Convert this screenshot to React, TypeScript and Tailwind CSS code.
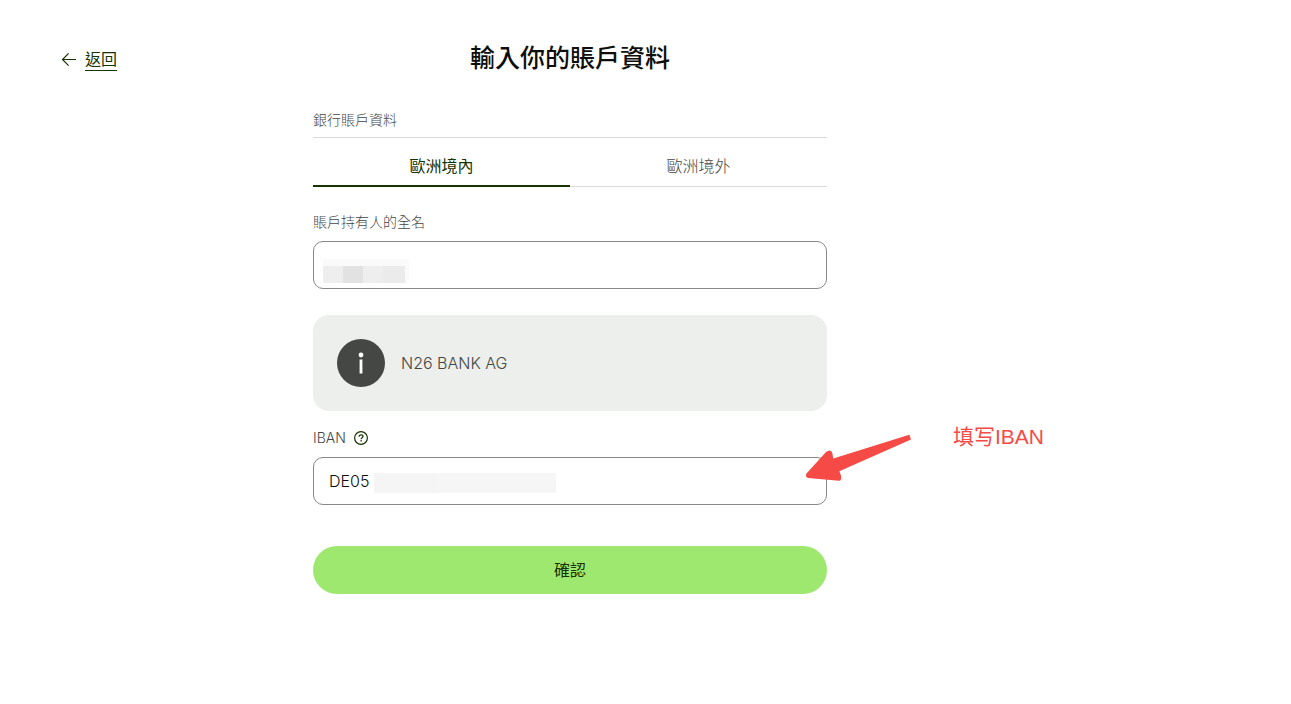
import { useState } from "react";

const tabs = ["歐洲境內", "歐洲境外"];

function BackArrow() {
  return (
    <svg className="h-4 w-4 shrink-0" viewBox="0 0 16 16" fill="none" stroke="#163300" strokeWidth="1.2" aria-hidden="true">
      <path d="M15 7.5H1.6M7.6 1.4 1.5 7.5l6.1 6.1" />
    </svg>
  );
}

function InfoIcon() {
  return (
    <svg className="h-12 w-12 shrink-0" viewBox="0 0 48 48" aria-hidden="true">
      <circle cx="24" cy="24" r="24" fill="#454745" />
      <circle cx="24" cy="16" r="2.4" fill="#fff" />
      <rect x="22.6" y="20.5" width="2.8" height="14" fill="#fff" />
    </svg>
  );
}

function HelpIcon() {
  return (
    <svg className="h-4 w-4" viewBox="0 0 16 16" fill="none" stroke="#163300" strokeWidth="1.2" aria-hidden="true">
      <circle cx="8" cy="8" r="6.4" />
      <path d="M6 6.8c0-1.2.9-2 2-2s2 .7 2 1.7c0 1.3-1.9 1.3-1.9 2.7" />
      <path d="M8.1 10v1.5" />
    </svg>
  );
}

function PointerArrow() {
  return (
    <svg
      className="pointer-events-none absolute -top-6 -right-[85px] h-[50px] w-[108px]"
      viewBox="0 0 108 50"
      fill="#f54a45"
      aria-hidden="true"
    >
      <path d="M105.3 1.7 107 6.5 35.3 38.3 37 42.5Q37.8 48 35 47.800L4 45Q.8 43.500 2.5 40.500L22 19Q27 15.500 28.300 20L29.300 25.500Z" />
    </svg>
  );
}

export default function App() {
  const [activeTab, setActiveTab] = useState(tabs[0]);

  return (
    <div className="flex min-h-screen bg-white font-['Inter','Noto_Sans_CJK_TC',sans-serif] text-[#0e0f0c]">
      <nav className="w-[313px] shrink pt-12 pl-[61px]">
        <a href="#back" className="inline-flex items-center gap-2 text-[#163300]">
          <BackArrow />
          <span className="border-b border-[#163300] text-base leading-[22px]">返回</span>
        </a>
      </nav>

      <main className="w-full max-w-[514px] pt-[42px] pb-12">
        <h1 className="text-center text-[25px] leading-8 font-medium">輸入你的賬戶資料</h1>

        <form onSubmit={(e) => e.preventDefault()}>
          <h2 className="mt-9 border-b border-[#d9dbd8] pb-[7px] text-sm leading-5 font-light text-[#454745]">
            銀行賬戶資料
          </h2>

          <div role="tablist" className="flex h-[49px] border-b border-[#d9dbd8]">
            {tabs.map((tab) => (
              <button
                key={tab}
                type="button"
                role="tab"
                aria-selected={tab === activeTab}
                onClick={() => setActiveTab(tab)}
                className={
                  tab === activeTab
                    ? "-mb-px flex-1 border-b-2 border-[#163300] pt-2 text-base text-[#163300]"
                    : "-mb-px flex-1 border-b-2 border-transparent pt-2 text-base font-light text-[#454745]"
                }
              >
                {tab}
              </button>
            ))}
          </div>

          <label htmlFor="holder" className="mt-[25px] block text-sm leading-5 font-light text-[#454745]">
            賬戶持有人的全名
          </label>
          <div className="relative mt-[9px]">
            <input
              id="holder"
              type="text"
              className="block h-12 w-full rounded-[10px] border border-[#868786] px-[15px] text-base font-light outline-none"
            />
            <div className="pointer-events-none absolute bottom-1.5 left-2.5 flex bg-[#fafafa] pt-[7px] pr-1">
              <span className="h-[17px] w-5 bg-[#eeeeee]" />
              <span className="h-[17px] w-5 bg-[#e2e2e2]" />
              <span className="h-[17px] w-5 bg-[#eeeeee]" />
              <span className="h-[17px] w-[22px] bg-[#ebebeb]" />
            </div>
          </div>

          <div className="mt-[26px] flex items-center gap-4 rounded-2xl bg-[#ecefeb] p-6">
            <InfoIcon />
            <p className="text-base font-light text-[#454745]">N26 BANK AG</p>
          </div>

          <div className="mt-[17px] flex items-center gap-[7px]">
            <label htmlFor="iban" className="text-sm leading-5 font-light text-[#454745]">
              IBAN
            </label>
            <button type="button" aria-label="IBAN">
              <HelpIcon />
            </button>
          </div>
          <div className="relative mt-[9px]">
            <input
              id="iban"
              type="text"
              defaultValue="DE05"
              className="block h-12 w-full rounded-[10px] border border-[#868786] px-[15px] text-base font-light outline-none"
            />
            <div className="pointer-events-none absolute top-4 left-[61px] flex h-5">
              <span className="w-16 bg-[#f5f5f5]" />
              <span className="w-[118px] bg-[#f6f6f6]" />
            </div>
            <PointerArrow />
            <p className="absolute -top-9 left-full ml-[126px] font-['Liberation_Sans','Noto_Sans_CJK_SC',sans-serif] text-[21px] leading-8 whitespace-nowrap text-[#f54a45]">
              填写IBAN
            </p>
          </div>

          <button
            type="submit"
            className="mt-[41px] h-12 w-full rounded-full bg-[#9fe870] text-base text-[#163300]"
          >
            確認
          </button>
        </form>
      </main>
    </div>
  );
}
